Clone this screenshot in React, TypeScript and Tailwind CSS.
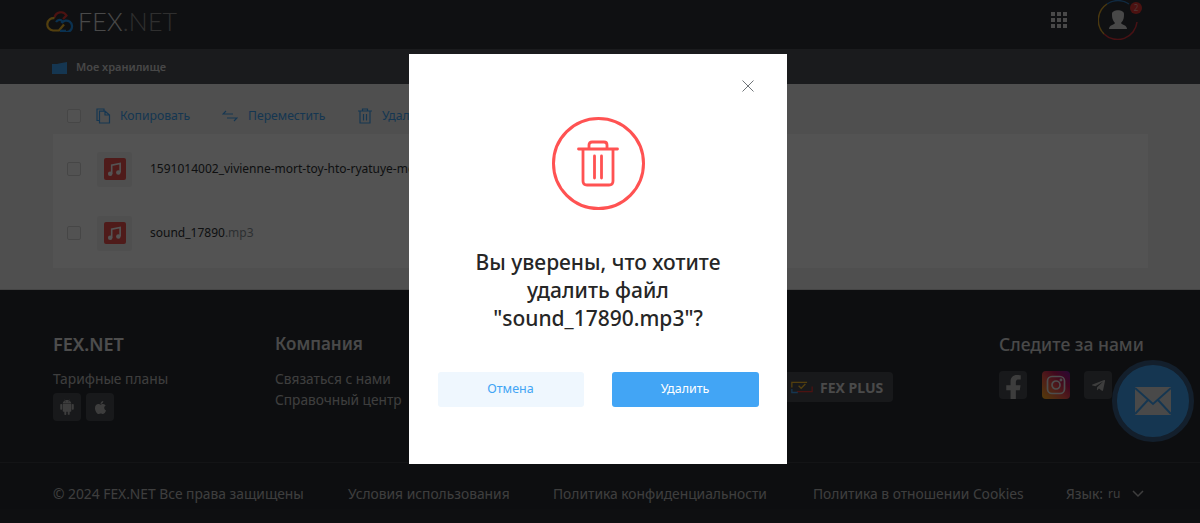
import { FaApple, FaFacebookF, FaTelegramPlane } from "react-icons/fa";
import { AiFillAndroid } from "react-icons/ai";

function Cloud() {
  return (
    <svg width="28" height="22" viewBox="0 0 28 22" fill="none" strokeWidth="2.2">
      <path d="M8.5 7.5 A6.5 6.5 0 0 1 20.5 5.5 L17 9" stroke="#e53935" />
      <path d="M8.5 8.2 A6.2 6.2 0 1 0 7 20.5 H13 L18 14.5" stroke="#fbc02d" />
      <path d="M10 12 C12 9 15 9.5 16.5 11.5 L15.5 13 M16.5 20.8 A5.8 5.8 0 1 0 15.5 13 M14 20.8 H20" stroke="#2196f3" />
    </svg>
  );
}

function Check() {
  return <span className="block h-[14px] w-[14px] shrink-0 rounded-[2px] border border-[#d4d4d4] bg-[#f7f7f7]" />;
}

function FileTile() {
  return (
    <span className="flex h-[35px] w-[35px] shrink-0 items-center justify-center rounded-[3px] bg-[#eeeeee]">
      <span className="flex h-[22px] w-[22px] items-center justify-center rounded-[2px] bg-[#ef5350]">
        <svg width="15" height="15" viewBox="0 0 16 16" fill="none">
          <path d="M5 12.5V3.4L14 1.6V11" stroke="white" strokeWidth="1.7" />
          <circle cx="3.4" cy="12.6" r="2.4" fill="white" />
          <circle cx="12.1" cy="11.2" r="2.4" fill="white" />
        </svg>
      </span>
    </span>
  );
}

function FileRow({ name, ext }: { name: string; ext?: string }) {
  return (
    <div className="flex h-[64px] items-center pl-[14px]">
      <Check />
      <span className="ml-[16px]"><FileTile /></span>
      <span className="ml-[18px] whitespace-nowrap text-[12px] text-[#2f3336]">
        {name}
        {ext && <span className="text-[#8a9299]">{ext}</span>}
      </span>
    </div>
  );
}

function SmallTile({ children, className = "" }: { children: React.ReactNode; className?: string }) {
  return (
    <span className={"flex h-[28px] w-[28px] items-center justify-center overflow-hidden rounded-[4px] bg-[#4a4d52] text-[#b9b9b9] " + className}>
      {children}
    </span>
  );
}

export default function App() {
  return (
    <div className="relative h-[523px] w-[1200px] overflow-hidden bg-[#2a2d33] font-['Noto_Sans','Open_Sans',sans-serif]">
      <header className="flex h-[49px] items-center bg-[#303338] pl-[46px] pr-[62px]">
        <span className="-mt-[7px] flex items-center">
          <Cloud />
          <span className="ml-[4px] font-['Lato',sans-serif] text-[25px] font-light leading-none tracking-[0.2px] text-[#dcdcdc]">
            FEX<span className="text-[#8f8f8f]">.NET</span>
          </span>
        </span>
        <span className="-mt-[9px] ml-auto grid grid-cols-3 gap-[2px]">
          {Array.from({ length: 9 }).map((_, i) => (
            <span key={i} className="h-[4px] w-[4px] bg-[#dddddd]" />
          ))}
        </span>
        <span className="relative -mt-[9px] ml-[31px] h-[40px] w-[40px]">
          <svg width="40" height="40" viewBox="0 0 40 40" fill="none" strokeWidth="1.5">
            <path d="M9 4 A19.5 19.5 0 0 1 31 4" stroke="#2f80c8" />
            <path d="M39 22 A19.5 19.5 0 0 1 6 34" stroke="#d9363e" />
            <path d="M6 34 A19.5 19.5 0 0 1 9 4" stroke="#e0a92e" />
            <path d="M11 29 C11 25 16 25 17 23 C14 20 14 16 14 14 C14 9 26 9 26 14 C26 17 26 20 23 23 C24 25 29 25 29 29 Z" fill="#d9d9d9" />
          </svg>
          <span className="absolute -right-[4px] top-[2px] flex h-[12px] w-[12px] items-center justify-center rounded-full bg-[#e53935] text-[8px] leading-none text-[#f3a5a3]">2</span>
        </span>
      </header>

      <div className="flex h-[35px] items-center bg-[#4f5258] pl-[52px] pt-[2px]">
        <svg width="15" height="12" viewBox="0 0 15 12" fill="#42a5f5">
          <path d="M0 2H5L7 1.4L15 0V12H0Z" />
        </svg>
        <span className="ml-[9px] text-[11px] font-semibold text-[#d8d8d8]">Мое хранилище</span>
      </div>

      <main className="h-[206px] border-b border-[#d0d0d0] bg-[#efefef] pl-[53px] pr-[52px]">
        <div className="flex h-[50px] items-center pl-[14px] pt-[14px] text-[12.2px] text-[#42a5f5]">
          <Check />
          <svg className="ml-[15px]" width="15" height="16" viewBox="0 0 15 16" fill="none" stroke="#42a5f5" strokeWidth="1.2">
            <path d="M3.5 12.5H1V1H8V3M3.5 3.2H9L13.5 7V15H3.5ZM9 3.2V7H13.5" />
          </svg>
          <span className="ml-[9px] w-[102px]">Копировать</span>
          <svg width="16" height="12" viewBox="0 0 16 12" fill="none" stroke="#42a5f5" strokeWidth="1.2">
            <path d="M4 1L1 4H11M12 11L15 8H5" />
          </svg>
          <span className="ml-[10px] w-[110px]">Переместить</span>
          <svg width="14" height="16" viewBox="0 0 14 16" fill="none" stroke="#42a5f5" strokeWidth="1.2">
            <path d="M0 3H14M4.5 3V1H9.5V3M2 3V15H12V3M5.5 6V12.5M8.5 6V12.5" />
          </svg>
          <span className="ml-[10px]">Удалить</span>
        </div>
        <div className="h-[134px] bg-[#fafafa] py-[3px]">
          <FileRow name="1591014002_vivienne-mort-toy-hto-ryatuye-mene.mp3" />
          <FileRow name="sound_17890" ext=".mp3" />
        </div>
      </main>

      <footer className="h-[233px]">
        <div className="flex h-[173px] border-b border-[#3a3d43] pl-[53px] pr-[56px] pt-[43px]">
          <div className="w-[222px]">
            <h3 className="text-[18px] font-semibold leading-[22px] text-[#e8e8e8]">FEX.NET</h3>
            <p className="mt-[13px] text-[13.8px] leading-[21px] text-[#bdbdbd]">Тарифные планы</p>
            <div className="mt-[4px] flex gap-[5px]">
              <SmallTile><AiFillAndroid size={18} /></SmallTile>
              <SmallTile><FaApple size={15} /></SmallTile>
            </div>
          </div>
          <div className="w-[500px]">
            <h3 className="text-[17px] font-semibold leading-[22px] text-[#dcdcdc]">Компания</h3>
            <p className="mt-[13px] text-[13.7px] leading-[21px] text-[#bdbdbd]">Связаться с нами</p>
            <p className="text-[13.7px] leading-[21px] text-[#bdbdbd]">Справочный центр</p>
          </div>
          <div className="pt-[39px]">
            <span className="flex h-[30px] w-[118px] items-center rounded-[4px] bg-[#4a4d52] pl-[16px]">
              <svg width="22" height="16" viewBox="0 0 26 17" fill="none" strokeWidth="1.5">
                <path d="M1 9V3H19" stroke="#fbc02d" />
                <path d="M25 8V14H7" stroke="#e53935" />
                <path d="M1 11V15H8" stroke="#42a5f5" />
                <path d="M9 7L12 10L17 5" stroke="#fbc02d" />
              </svg>
              <span className="ml-[7px] text-[14px] font-bold text-[#dfdfdf]">FEX PLUS</span>
            </span>
          </div>
          <div className="ml-auto w-[145px]">
            <h3 className="whitespace-nowrap text-[17.5px] font-medium leading-[22px] text-[#dcdcdc]">Следите за нами</h3>
            <div className="mt-[16px] flex gap-[14.5px]">
              <SmallTile className="items-end"><FaFacebookF size={27} className="translate-y-[3px]" /></SmallTile>
              <span className="flex h-[28px] w-[28px] items-center justify-center rounded-[4px] bg-[linear-gradient(45deg,#f9a825_5%,#ef5350_45%,#c2185b_70%,#7b1fa2)]">
                <svg width="20" height="20" viewBox="0 0 20 20" fill="none" stroke="#e8e8e8" strokeWidth="1.7">
                  <rect x="1.5" y="1.5" width="17" height="17" rx="4.5" />
                  <circle cx="10" cy="10" r="4" />
                  <circle cx="15" cy="5" r="0.6" fill="#e8e8e8" />
                </svg>
              </span>
              <SmallTile><FaTelegramPlane size={15} /></SmallTile>
            </div>
          </div>
        </div>
        <div className="flex h-[60px] items-center pt-[2px] pl-[53px] text-[13.8px] text-[#bdbdbd]">
          <span className="w-[295px]">© 2024 FEX.NET Все права защищены</span>
          <span className="w-[205px]">Условия использования</span>
          <span className="w-[260px]">Политика конфиденциальности</span>
          <span className="w-[253px]">Политика в отношении Cookies</span>
          <span>Язык:</span>
          <span className="ml-[5px] text-[12px]">ru</span>
          <svg className="ml-[12px]" width="12" height="8" viewBox="0 0 12 8" fill="none" stroke="#bdbdbd" strokeWidth="1.5">
            <path d="M1 1L6 6L11 1" />
          </svg>
        </div>
      </footer>

      <button className="absolute left-[1112px] top-[360px] flex h-[82px] w-[82px] items-center justify-center rounded-full border-[5px] border-[#3a5e85] bg-[#42a5f5]">
        <svg width="36" height="28" viewBox="0 0 36 28">
          <rect width="36" height="28" fill="#dddddd" />
          <path d="M0 1L18 17L36 1M0 27L13 13M36 27L23 13" fill="none" stroke="#42a5f5" strokeWidth="2" />
        </svg>
      </button>

      <div className="absolute inset-0 bg-black/[0.67]">
        <div className="relative ml-[409px] mt-[54px] flex h-[410px] w-[378px] flex-col items-center bg-white pt-[63px]">
          <button className="absolute right-[33px] top-[26px] text-[#6f7478]">
            <svg width="12" height="12" viewBox="0 0 12 12" fill="none" stroke="currentColor" strokeWidth="1">
              <path d="M0.5 0.5L11.5 11.5M11.5 0.5L0.5 11.5" />
            </svg>
          </button>
          <span className="flex h-[93px] w-[93px] items-center justify-center rounded-full border-[3.5px] border-[#ff5252]">
            <svg width="42" height="47" viewBox="0 0 42 47" fill="none" stroke="#ff5252" strokeWidth="2.8" strokeLinecap="round" strokeLinejoin="round">
              <path d="M1.5 9H40.5M12 9V5C12 3 13 2 15 2H27C29 2 30 3 30 5V9M6 9V41C6 43.5 7.5 45 10 45H32C34.5 45 36 43.5 36 41V9M17.5 16V38M24.5 16V38" />
            </svg>
          </span>
          <h2 className="mt-[38px] w-[300px] text-center text-[21px] font-medium leading-[28px] text-[#262626]">
            Вы уверены, что хотите удалить файл "sound_17890.mp3"?
          </h2>
          <div className="mt-[40px] flex gap-[28px]">
            <button className="h-[35px] w-[146px] rounded-[3px] bg-[#eff7fe] pb-[1px] text-[12.5px] text-[#42a5f5]">Отмена</button>
            <button className="h-[35px] w-[147px] rounded-[3px] bg-[#42a5f5] pb-[1px] text-[12.5px] text-white">Удалить</button>
          </div>
        </div>
      </div>
    </div>
  );
}
